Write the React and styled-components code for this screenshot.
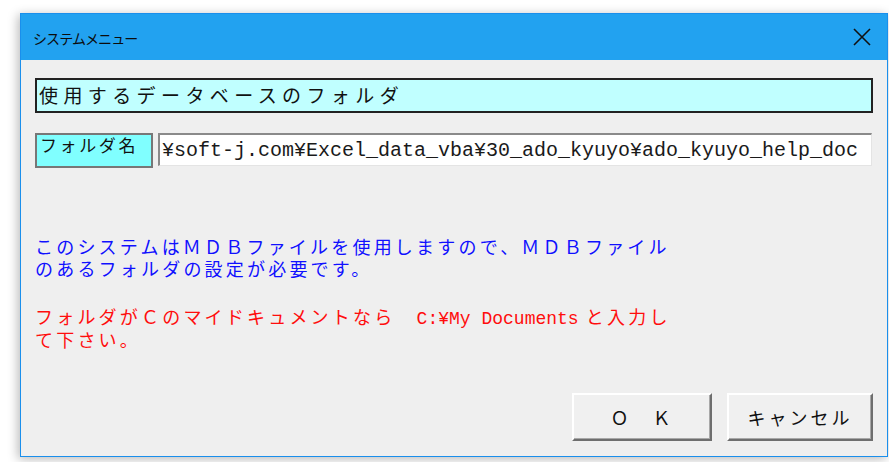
import styled, { createGlobalStyle } from 'styled-components'

const GlobalStyle = createGlobalStyle`
  html, body {
    margin: 0;
    padding: 0;
    background: #ffffff;
  }
  body {
    font-family: "Noto Sans CJK JP", "Liberation Sans", sans-serif;
  }
`

const JP = '"Noto Sans CJK JP", "Liberation Sans", sans-serif'
const MONO = '"Liberation Mono", "Noto Sans CJK JP", monospace'

function App() {
  return (
    <>
      <GlobalStyle />
      <Page>
        <Window>
          <TitleBar>
            <Title>システムメニュー</Title>
            <CloseButton aria-label='close'>
              <svg width='18' height='18' viewBox='0 0 18 18'>
                <path d='M1 1 L17 17 M17 1 L1 17' stroke='#111' strokeWidth='1.6' fill='none' />
              </svg>
            </CloseButton>
          </TitleBar>

          <Body>
            <Heading>使用するデータベースのフォルダ</Heading>

            <FolderRow>
              <FieldLabel>フォルダ名</FieldLabel>
              <PathInput
                readOnly
                defaultValue='¥soft-j.com¥Excel_data_vba¥30_ado_kyuyo¥ado_kyuyo_help_doc'
              />
            </FolderRow>

            <Message $color='#1010ff' $top={67}>
              このシステムはＭＤＢファイルを使用しますので、ＭＤＢファイル
              <br />
              のあるフォルダの設定が必要です。
            </Message>

            <Message $color='#ff0d0d' $top={26}>
              フォルダがＣのマイドキュメントなら　<Mono>C:¥My Documents</Mono> と入力し
              <br />
              て下さい。
            </Message>

            <ButtonBar>
              <DialogButton $width={140}>Ｏ　Ｋ</DialogButton>
              <DialogButton $width={146}>キャンセル</DialogButton>
            </ButtonBar>
          </Body>
        </Window>
      </Page>
    </>
  )
}
export default App

const Page = styled.div`
  width: 889px;
  height: 462px;
  padding: 13px 0 0 20px;
  box-sizing: border-box;
  overflow: hidden;
`

const Window = styled.div`
  width: 868px;
  height: 444px;
  box-sizing: border-box;
  border: 1px solid #1a8fec;
  background: #efefef;
  box-shadow: -2px 2px 10px rgba(0, 0, 0, 0.28);
  display: flex;
  flex-direction: column;
`

const TitleBar = styled.div`
  height: 46px;
  flex: none;
  background: #22a2f0;
  display: flex;
  align-items: center;
  justify-content: space-between;
  padding: 0 14px 0 12px;
`

const Title = styled.span`
  font-family: ${JP};
  font-size: 14px;
  color: #0c0c0c;
  letter-spacing: -0.9px;
  margin-top: 1px;
`

const CloseButton = styled.div`
  width: 22px;
  height: 22px;
  display: flex;
  align-items: center;
  justify-content: center;
`

const Body = styled.div`
  flex: 1;
  display: flex;
  flex-direction: column;
  padding: 18px 14px 0 14px;
  background: #efefef;
`

const Heading = styled.div`
  height: 35px;
  box-sizing: border-box;
  border: 2px solid #222;
  background: #c0ffff;
  font-family: ${JP};
  font-size: 19px;
  letter-spacing: 5.4px;
  line-height: 30px;
  padding-left: 2px;
  color: #111;
`

const FolderRow = styled.div`
  margin-top: 20px;
  display: flex;
  gap: 5px;
  height: 35px;
`

const FieldLabel = styled.div`
  width: 118px;
  flex: none;
  box-sizing: border-box;
  border: 2px solid #777;
  background: #80ffff;
  font-family: ${JP};
  font-size: 17px;
  letter-spacing: 2.6px;
  line-height: 20px;
  padding: 0 0 0 3px;
  color: #111;
`

const PathInput = styled.input`
  flex: 1;
  margin-right: 1px;
  height: 33px;
  box-sizing: border-box;
  border: none;
  border-top: 2px solid #8a8a8a;
  border-left: 2px solid #8a8a8a;
  border-right: 1px solid #e4e4e4;
  border-bottom: 1px solid #e4e4e4;
  background: #ffffff;
  font-family: ${MONO};
  font-size: 20px;
  color: #1a1a1a;
  padding: 0 0 0 2px;
  outline: none;
`

const Message = styled.p`
  margin: ${(p) => p.$top}px 0 0 0;
  font-family: ${JP};
  font-size: 18px;
  line-height: 22px;
  letter-spacing: 3.2px;
  color: ${(p) => p.$color};
`

const Mono = styled.span`
  font-family: ${MONO};
  font-size: 18px;
  line-height: 18px;
  letter-spacing: 0;
`

const ButtonBar = styled.div`
  margin-top: auto;
  margin-bottom: 15px;
  display: flex;
  justify-content: flex-end;
  gap: 15px;
`

const DialogButton = styled.button`
  width: ${(p) => p.$width}px;
  height: 48px;
  box-sizing: border-box;
  background: #f0f0f0;
  border: none;
  border-top: 2px solid #ffffff;
  border-left: 2px solid #ffffff;
  border-right: 2px solid #6e6e6e;
  border-bottom: 2px solid #6e6e6e;
  box-shadow: inset -1px -1px 0 #a8a8a8;
  font-family: ${JP};
  font-size: 18px;
  letter-spacing: 3px;
  color: #111;
  padding: 0;
`
